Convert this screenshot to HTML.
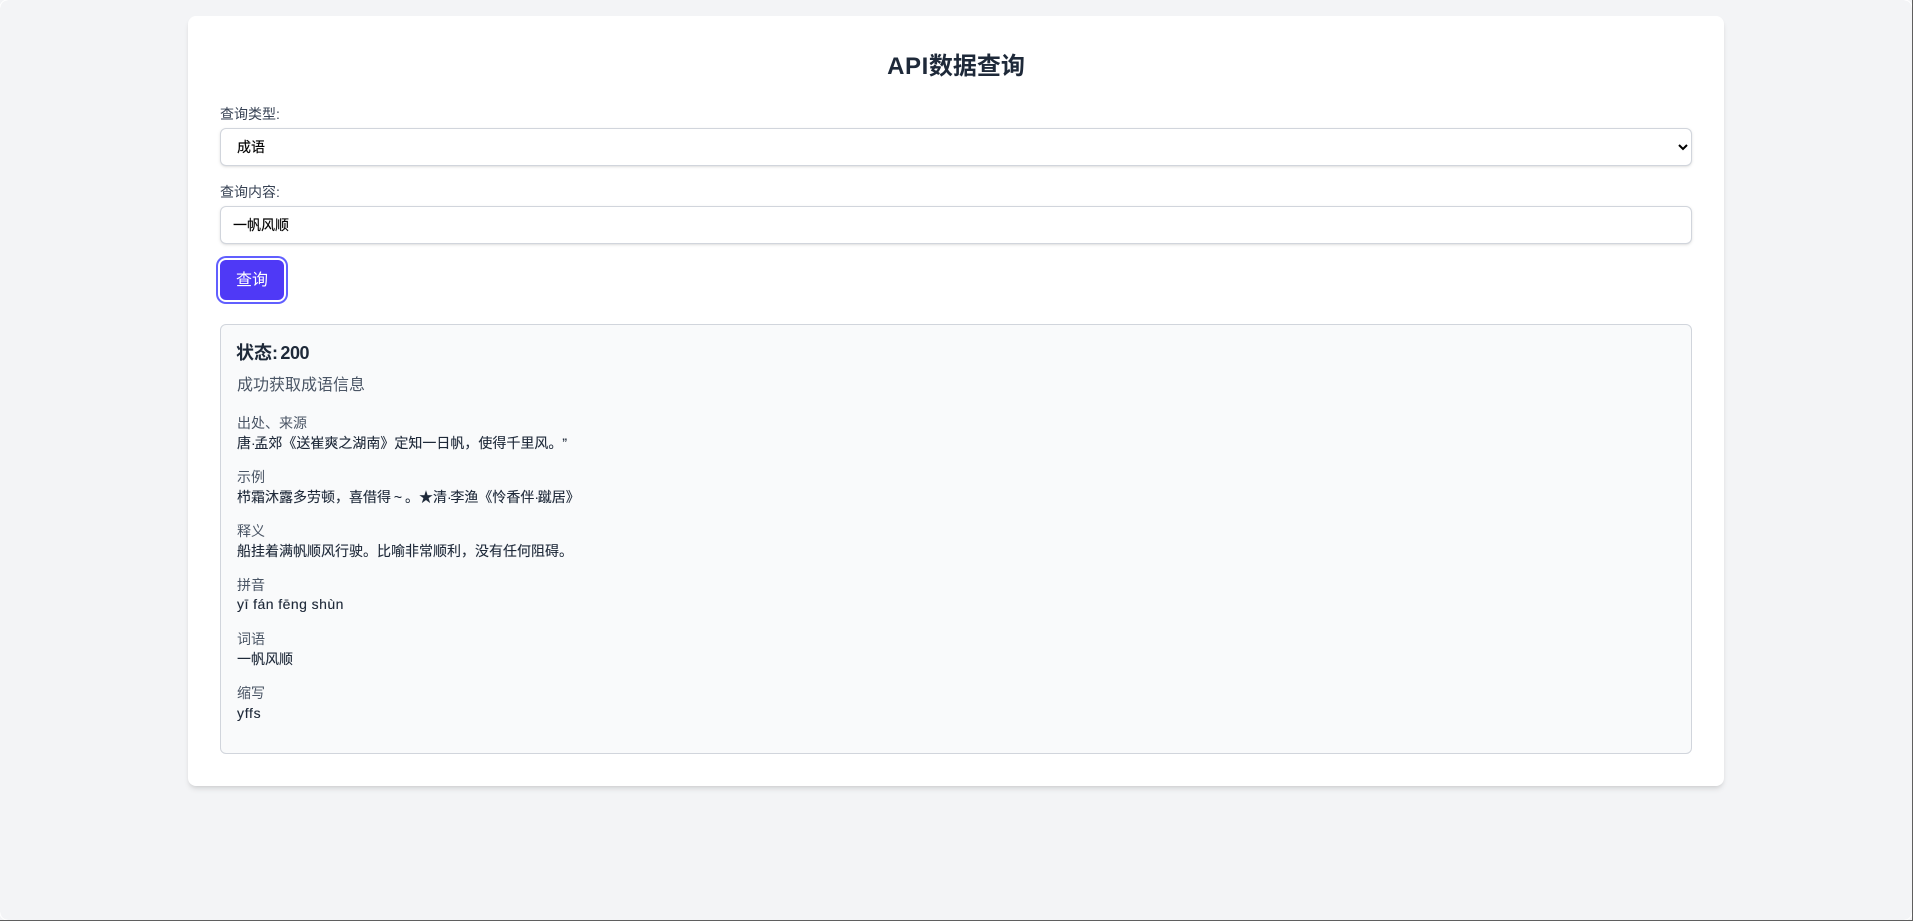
<!DOCTYPE html>
<html lang="zh-CN">
<head>
<meta charset="utf-8">
<title>API数据查询</title>
<style>
*{box-sizing:border-box}
html,body{margin:0;padding:0;width:1913px;height:921px;overflow:hidden;background:#f3f4f6}
body{position:relative;font-family:"Liberation Sans","Noto Sans CJK SC",sans-serif;color:#1e2939;font-size:16px;line-height:24px;text-spacing-trim:space-all}
.frame-r{position:absolute;left:1912px;top:0;width:1px;height:921px;background:#5f5f5f}
.frame-b{position:absolute;left:0;top:920px;width:1913px;height:1px;background:#5f5f5f}
.corner{position:absolute;width:8px;height:8px}
.card{position:absolute;left:188px;top:16px;width:1536px;height:770px;background:#fff;border-radius:8px;padding:32px;box-shadow:0 4px 6px -1px rgba(0,0,0,.1),0 2px 4px -2px rgba(0,0,0,.1)}
h1{position:relative;top:3px;margin:0 0 24px;font-size:24px;line-height:32px;font-weight:700;text-align:center;color:#1e2939}
h1 span{letter-spacing:.6px}
label{display:block;font-size:14px;line-height:20px;color:#364153;margin-bottom:4px}
.field{margin-bottom:16px}
select,input{display:block;width:100%;height:38px;margin:0;border:1px solid #d1d5dc;border-radius:6px;background:#fff;font-family:inherit;font-size:14px;color:#000;padding:0 12px;box-shadow:0 1px 3px 0 rgba(0,0,0,.1),0 1px 2px -1px rgba(0,0,0,.1);outline:none;-webkit-text-stroke:.15px #000;text-spacing-trim:space-all}
button{display:block;height:40px;width:64px;padding:2px 0 0;border:0;border-radius:6px;background:#4f39f6;color:#fff;font-family:inherit;font-size:16px;line-height:24px;box-shadow:0 0 0 2px #fff,0 0 0 4px #615fff}
.result{margin-top:24px;height:430px;border:1px solid #d1d5dc;border-radius:6px;background:#f9fafb;padding:16px}
h3{position:relative;top:-2px;margin:0 0 4px;font-size:18px;line-height:28px;font-weight:700;color:#1e2939;margin-left:-1px;word-spacing:-2.6px}
h3 b{letter-spacing:-.45px}
.msg{position:relative;top:1px;margin:0 0 16px;font-size:16px;line-height:24px;color:#4a5565}
.item{margin-bottom:12px;font-size:14px;line-height:21px}
.item .k{color:#4a5565}
.item .v{position:relative;top:-1px;color:#1e2939;-webkit-text-stroke:.12px #1e2939}
.item .lat{letter-spacing:.45px}
.d{letter-spacing:-1.3px}
.t{display:inline-block;width:14px;text-align:center}
</style>
</head>
<body>
<div class="card">
  <h1><span>API</span>数据查询</h1>
  <div class="field">
    <label>查询类型:</label>
    <select><option>成语</option></select>
  </div>
  <div class="field">
    <label>查询内容:</label>
    <input type="text" value="一帆风顺">
  </div>
  <button>查询</button>
  <div class="result">
    <h3>状态: <b>200</b></h3>
    <p class="msg">成功获取成语信息</p>
    <div class="item"><div class="k">出处、来源</div><div class="v">唐<span class="d">·</span>孟郊《送崔爽之湖南》定知一日帆，使得千里风。”</div></div>
    <div class="item"><div class="k">示例</div><div class="v">栉霜沐露多劳顿，喜借得<span class="t">~</span>。★清<span class="d">·</span>李渔《怜香伴<span class="d">·</span>蹴居》</div></div>
    <div class="item"><div class="k">释义</div><div class="v">船挂着满帆顺风行驶。比喻非常顺利，没有任何阻碍。</div></div>
    <div class="item"><div class="k">拼音</div><div class="v lat" style="top:-2px">yī fán fēng shùn</div></div>
    <div class="item"><div class="k">词语</div><div class="v">一帆风顺</div></div>
    <div class="item"><div class="k">缩写</div><div class="v lat" style="letter-spacing:.7px">yffs</div></div>
  </div>
</div>
<svg class="corner" style="left:0;top:0" viewBox="0 0 8 8"><path d="M0 7.5A7.5 7.5 0 0 1 7.5 0" fill="none" stroke="#fff" stroke-width="1"/></svg>
<svg class="corner" style="left:1904px;top:0" viewBox="0 0 8 8"><path d="M.5 0A7.5 7.5 0 0 1 8 7.5" fill="none" stroke="#fff" stroke-width="1"/></svg>
<svg class="corner" style="left:0;top:912px" viewBox="0 0 8 8"><path d="M0 .5A7.5 7.5 0 0 0 7.5 8" fill="none" stroke="#fff" stroke-width="1"/></svg>
<svg class="corner" style="left:1904px;top:912px" viewBox="0 0 8 8"><path d="M8 .5A7.5 7.5 0 0 1 .5 8" fill="none" stroke="#fff" stroke-width="1"/></svg>
<div class="frame-r"></div>
<div class="frame-b"></div>
</body>
</html>
